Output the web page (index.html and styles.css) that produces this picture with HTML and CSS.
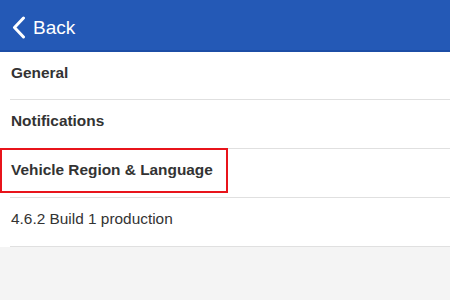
FILE: index.html
```html
<!DOCTYPE html>
<html lang="en">
<head>
  <meta charset="UTF-8" />
  <title>Settings</title>
  <link rel="stylesheet" href="styles.css">
</head>
<body>
  <div class="header">
    <a class="back">
      <svg class="chev" width="14" height="24" viewBox="0 0 14 24">
        <path d="M11.5 2 L2.5 11.5 L11.5 21" fill="none" stroke="#fff" stroke-width="3" stroke-linecap="round" stroke-linejoin="round"/>
      </svg>
      <span>Back</span>
    </a>
  </div>

  <ul class="list">
    <li class="row bold">General</li>
    <li class="row bold">Notifications</li>
    <li class="row bold highlight">Vehicle Region &amp; Language</li>
    <li class="row">4.6.2 Build 1 production</li>
  </ul>
</body>
</html>
```

FILE: styles.css
```css
* { margin: 0; padding: 0; box-sizing: border-box; }
html, body {
  width: 100%;
  height: 100%;
  overflow: hidden;
  background: #f4f4f4;
  font-family: 'Liberation Sans', Arial, sans-serif;
  color: #333;
}

.header {
  height: 52px;
  background: #2459b6;
  border-bottom: 2px solid #1c4ea6;
  display: flex;
  align-items: center;
  padding: 5px 0 0 12px;
}

.back {
  display: flex;
  align-items: center;
  gap: 7px;
  color: #fff;
  font-size: 19px;
}

.list {
  list-style: none;
  background: #fff;
}

.row {
  position: relative;
  height: 49px;
  display: flex;
  align-items: center;
  margin-left: 10px;
  padding: 0 0 6px 1px;
  font-size: 15.4px;
  border-bottom: 1px solid #e0e0e0;
}

.row.bold { font-weight: bold; }

.list .row:first-child { height: 48px; }

.highlight::after {
  content: '';
  position: absolute;
  left: -10px;
  top: -1px;
  width: 224px;
  height: 41px;
  border: 2px solid #e8141b;
}
```
